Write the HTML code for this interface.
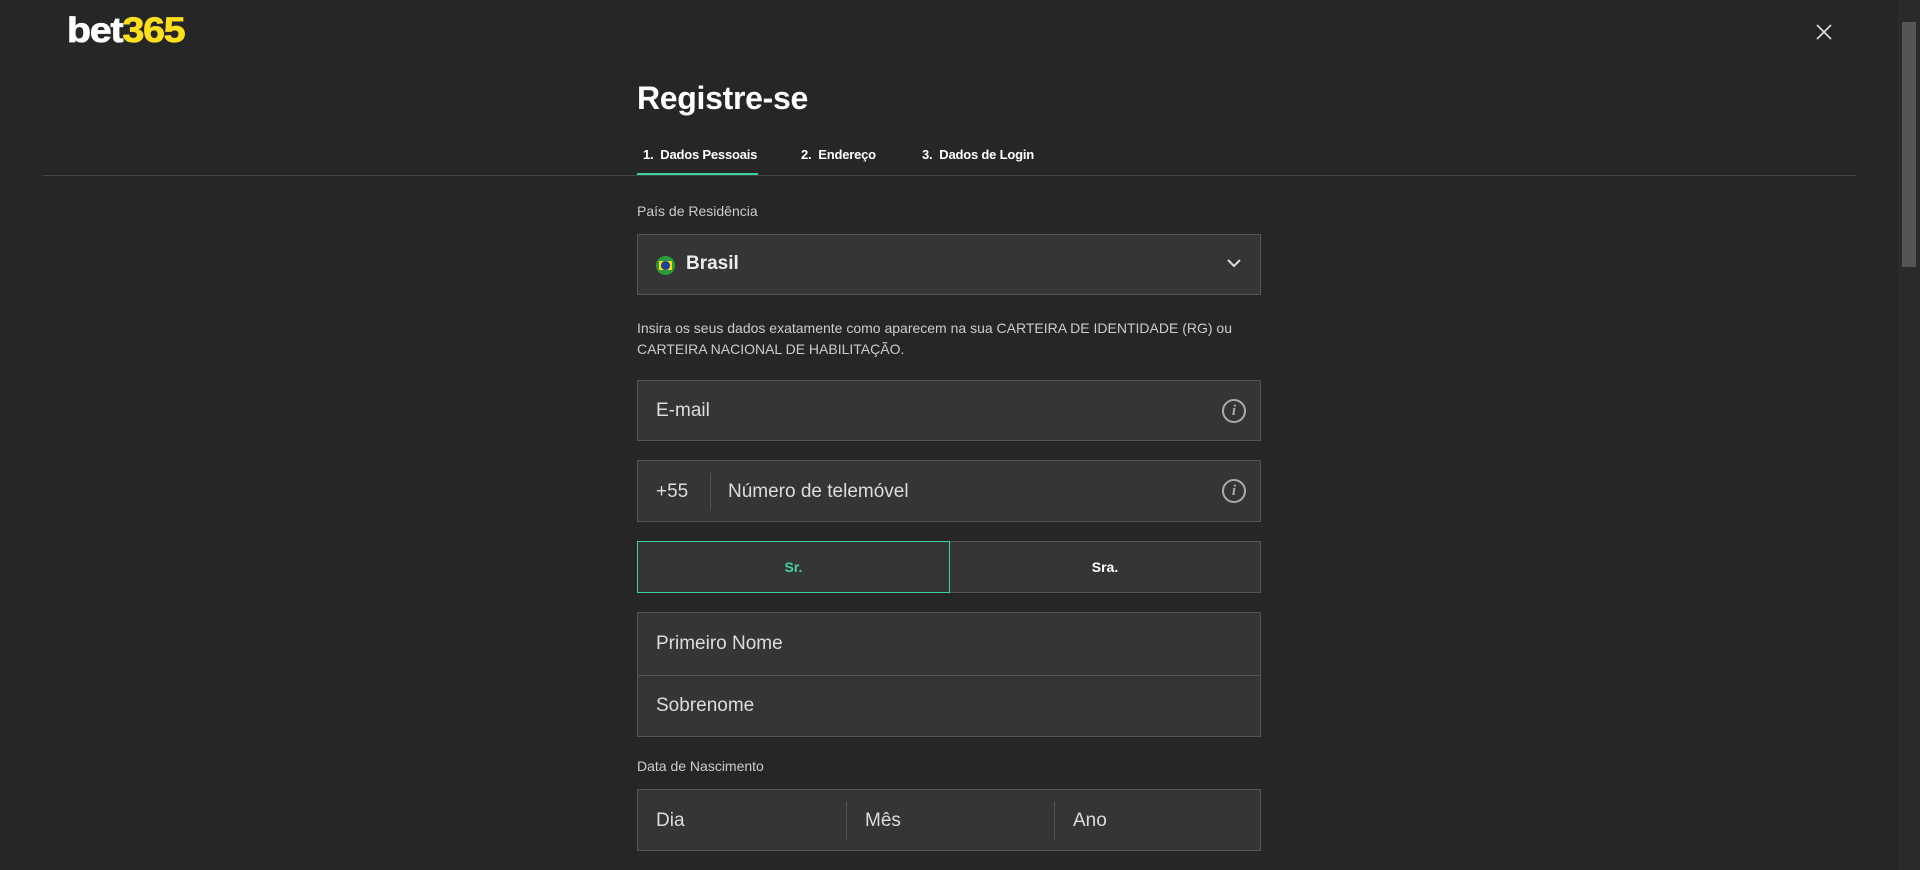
<!DOCTYPE html>
<html><head><meta charset="utf-8"><style>
*{box-sizing:border-box;margin:0;padding:0}
body{width:1920px;height:870px;background:#262626;font-family:"Liberation Sans",sans-serif;color:#ddd;position:relative;overflow:hidden}
.a{position:absolute}
.box{position:absolute;left:637px;width:624px;background:#353535;border:1px solid #555;}
.ph{position:absolute;font-size:19px;color:#ddd}
.info{position:absolute;right:14px;width:24px;height:24px;border:2px solid #aaa;border-radius:50%;color:#aaa;font:italic bold 15px "Liberation Serif",serif;text-align:center;line-height:20px}
.tab{position:absolute;top:147px;font-size:13px;font-weight:bold;color:#fff;letter-spacing:-0.2px}
</style></head><body>
<div class="a" style="left:67px;top:11px;font-size:35px;font-weight:900;letter-spacing:-1px;color:#fff;transform:scaleX(1.12);transform-origin:left;-webkit-text-stroke:0.8px currentColor">bet<span style="color:#ffdf1b">365</span></div>
<svg class="a" style="left:1816px;top:24px" width="16" height="16"><path d="M1 1L15 15M15 1L1 15" stroke="#ddd" stroke-width="1.6"/></svg>
<div class="a" style="left:1898px;top:0;width:22px;height:870px;background:#2a2a2a"></div>
<div class="a" style="left:1902px;top:22px;width:14px;height:245px;background:#555"></div>
<div class="a" style="left:637px;top:80px;font-size:32px;font-weight:bold;color:#fff;letter-spacing:-0.3px">Registre-se</div>
<div class="tab" style="left:643px">1.&nbsp; Dados Pessoais</div>
<div class="tab" style="left:801px">2.&nbsp; Endereço</div>
<div class="tab" style="left:922px">3.&nbsp; Dados de Login</div>
<div class="a" style="left:43px;top:175px;width:1813px;height:1px;background:#444"></div>
<div class="a" style="left:637px;top:173px;width:121px;height:2px;background:#3fd1a0"></div>
<div class="a" style="left:637px;top:203px;font-size:14px;color:#ccc">País de Residência</div>
<div class="box" style="top:234px;height:61px">
 <div class="a" style="left:18px;top:21px;width:19px;height:19px;border-radius:50%;background:#2a9d3a"><div class="a" style="left:3px;top:5px;width:13px;height:9px;background:#f5d90a"></div><div class="a" style="left:5px;top:5px;width:9px;height:9px;border-radius:50%;background:#1c3f9a"></div></div>
 <div class="a" style="left:48px;top:18px;font-size:19px;font-weight:bold;color:#eee">Brasil</div>
 <svg class="a" style="right:18px;top:23px" width="16" height="12"><path d="M2 2L8 8L14 2" stroke="#ddd" stroke-width="2" fill="none"/></svg>
</div>
<div class="a" style="left:637px;top:318px;width:640px;font-size:14px;line-height:21px;color:#ccc">Insira os seus dados exatamente como aparecem na sua CARTEIRA DE IDENTIDADE (RG) ou CARTEIRA NACIONAL DE HABILITAÇÃO.</div>
<div class="box" style="top:380px;height:61px"><div class="ph" style="left:18px;top:19px">E-mail</div><div class="info" style="top:18px">i</div></div>
<div class="box" style="top:460px;height:62px"><div class="ph" style="left:18px;top:20px">+55</div><div class="a" style="left:72px;top:12px;width:1px;height:36px;background:#555"></div><div class="ph" style="left:90px;top:20px">Número de telemóvel</div><div class="info" style="top:18px">i</div></div>
<div class="box" style="top:541px;height:52px;background:#353535">
 <div class="a" style="left:-1px;top:-1px;width:313px;height:52px;border:1px solid #3fd1a0;color:#3fd1a0;font-weight:bold;font-size:14px;text-align:center;line-height:50px">Sr.</div>
 <div class="a" style="left:312px;top:0;width:310px;height:50px;color:#fff;font-weight:bold;font-size:14px;text-align:center;line-height:50px">Sra.</div>
</div>
<div class="box" style="top:612px;height:125px"><div class="ph" style="left:18px;top:20px">Primeiro Nome</div><div class="a" style="left:0;top:62px;width:622px;height:1px;background:#555"></div><div class="ph" style="left:18px;top:82px">Sobrenome</div></div>
<div class="a" style="left:637px;top:758px;font-size:14px;color:#ccc">Data de Nascimento</div>
<div class="box" style="top:789px;height:62px"><div class="ph" style="left:18px;top:20px">Dia</div><div class="a" style="left:208px;top:12px;width:1px;height:38px;background:#555"></div><div class="ph" style="left:227px;top:20px">Mês</div><div class="a" style="left:416px;top:12px;width:1px;height:38px;background:#555"></div><div class="ph" style="left:435px;top:20px">Ano</div></div>
</body></html>
